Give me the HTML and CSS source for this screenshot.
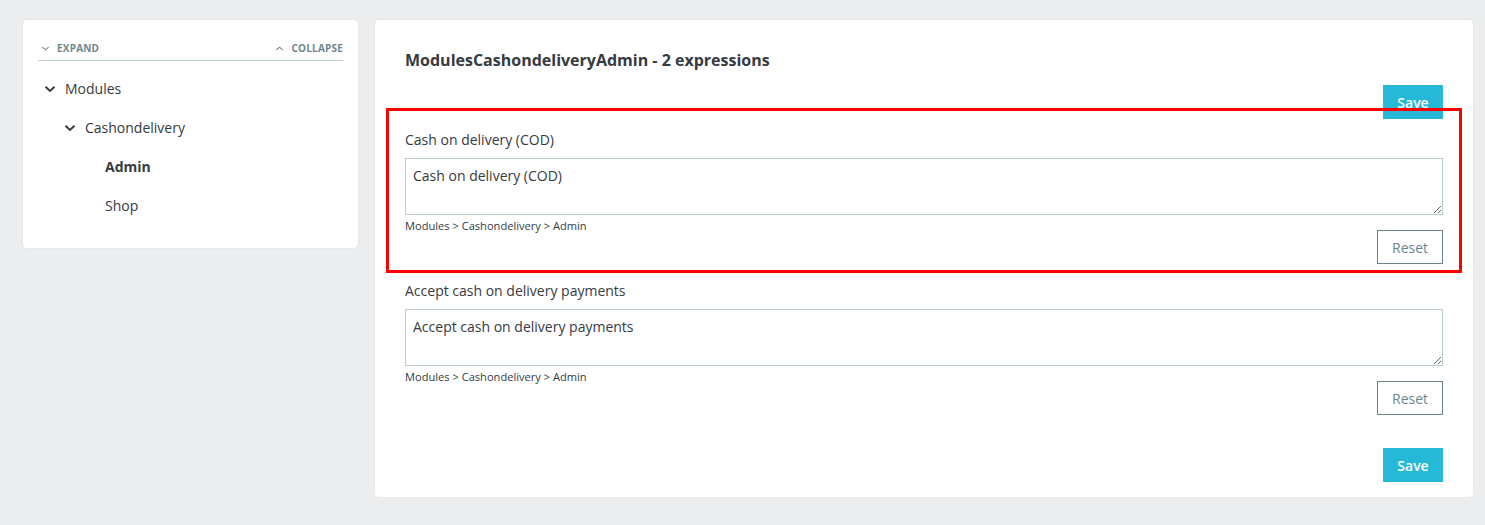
FILE: index.html
```html
<!DOCTYPE html>
<html lang="en">
<head>
<meta charset="utf-8">
<title>Translations</title>
<link rel="stylesheet" href="styles.css">
</head>
<body>
<div class="page">
  <aside class="card tree-card">
    <div class="tree-actions">
      <button class="tree-action" type="button">
        <svg class="tiny-chev" viewBox="0 0 10 10" width="9" height="9"><path d="M1.5 3.5 L5 6.5 L8.5 3.5" fill="none" stroke="currentColor" stroke-width="1.3"/></svg>
        EXPAND
      </button>
      <button class="tree-action" type="button">
        <svg class="tiny-chev" viewBox="0 0 10 10" width="9" height="9"><path d="M1.5 6.5 L5 3.5 L8.5 6.5" fill="none" stroke="currentColor" stroke-width="1.3"/></svg>
        COLLAPSE
      </button>
    </div>
    <ul class="tree">
      <li class="tree-item level-0">
        <svg class="chev" viewBox="0 0 12 12" width="12" height="12"><path d="M1.5 3.8 L6 8 L10.5 3.8" fill="none" stroke="currentColor" stroke-width="2"/></svg>
        <span>Modules</span>
      </li>
      <li class="tree-item level-1">
        <svg class="chev" viewBox="0 0 12 12" width="12" height="12"><path d="M1.5 3.8 L6 8 L10.5 3.8" fill="none" stroke="currentColor" stroke-width="2"/></svg>
        <span>Cashondelivery</span>
      </li>
      <li class="tree-item level-2 active"><span>Admin</span></li>
      <li class="tree-item level-2"><span>Shop</span></li>
    </ul>
  </aside>

  <main class="card form-card">
    <h2 class="form-title">ModulesCashondeliveryAdmin - 2 expressions</h2>
    <div class="save-row"><button class="btn-save" type="button">Save</button></div>

    <div class="group">
      <label class="group-label">Cash on delivery (COD)</label>
      <textarea class="group-input">Cash on delivery (COD)</textarea>
      <div class="crumb">Modules &gt; Cashondelivery &gt; Admin</div>
      <div class="reset-row"><button class="btn-reset" type="button">Reset</button></div>
    </div>

    <div class="group">
      <label class="group-label">Accept cash on delivery payments</label>
      <textarea class="group-input">Accept cash on delivery payments</textarea>
      <div class="crumb">Modules &gt; Cashondelivery &gt; Admin</div>
      <div class="reset-row"><button class="btn-reset" type="button">Reset</button></div>
    </div>

    <div class="save-row bottom"><button class="btn-save" type="button">Save</button></div>

    <div class="highlight"></div>
  </main>
</div>
</body>
</html>
```

FILE: styles.css
```css
* { box-sizing: border-box; }

html, body {
  margin: 0;
  padding: 0;
  background: #ebedef;
  font-family: "Open Sans", "Noto Sans", "Liberation Sans", sans-serif;
  color: #363a41;
}

.page {
  display: flex;
  align-items: flex-start;
  gap: 17px;
  padding: 20px 12px 0 23px;
}

.card {
  background: #fff;
  border-radius: 4px;
  box-shadow: 0 0 2px rgba(0, 0, 0, 0.08);
}

/* Left tree card */
.tree-card {
  width: 335px;
  height: 228px;
  padding: 19px 15px 0 15px;
}

.tree-actions {
  display: flex;
  justify-content: space-between;
  border-bottom: 1px solid #bbcdd2;
  height: 22px;
}

.tree-action {
  background: none;
  border: none;
  padding: 0;
  margin: 0;
  height: 18px;
  font-family: inherit;
  font-size: 10px;
  font-weight: 700;
  color: #6c868e;
  display: flex;
  align-items: center;
  gap: 8px;
  letter-spacing: 0.2px;
}

.tree-action:first-child { padding-left: 3px; gap: 7px; }
.tree-action:last-child { gap: 7px; }

.tiny-chev { color: #6c868e; }

.tree {
  list-style: none;
  margin: 0;
  padding: 8px 0 0 0;
}

.tree-item {
  display: flex;
  align-items: center;
  height: 39px;
  font-size: 14px;
  color: #363a41;
}

.tree-item .chev {
  color: #363a41;
  margin-right: 9px;
}

.level-0 { padding-left: 6px; }
.level-1 { padding-left: 26px; }
.level-2 { padding-left: 67px; }

.tree-item.active { font-weight: 700; }

/* Right form card */
.form-card {
  position: relative;
  flex: 1;
  height: 477px;
  padding: 29px 30px 0 30px;
}

.form-title {
  margin: 0;
  font-size: 16px;
  line-height: 22px;
  font-weight: 700;
  color: #363a41;
}

.save-row {
  display: flex;
  justify-content: flex-end;
  margin-top: 14px;
}

.save-row.bottom { margin-top: 33px; }

.btn-save {
  height: 34px;
  width: 60px;
  border: none;
  background: #25b9d7;
  color: #fff;
  font-family: inherit;
  font-size: 14px;
  font-weight: 600;
  padding: 0;
}

.group {
  display: flex;
  flex-direction: column;
  margin-top: 11px;
}

.group + .group { margin-top: 17px; }

.group-label {
  font-size: 14px;
  line-height: 20px;
  color: #363a41;
  margin-bottom: 8px;
}

.group-input {
  display: block;
  width: 100%;
  height: 57px;
  border: 1px solid #bbcdd2;
  border-radius: 0;
  padding: 7px 7px;
  font-family: inherit;
  font-size: 14px;
  line-height: 20px;
  color: #363a41;
  resize: vertical;
  outline: none;
}

.crumb {
  margin-top: 4px;
  font-size: 11.1px;
  line-height: 14px;
  color: #363a41;
}

.reset-row {
  display: flex;
  justify-content: flex-end;
  margin-top: -3px;
}

.btn-reset {
  height: 34px;
  width: 66px;
  background: #fff;
  border: 1px solid #6c868e;
  color: #6c868e;
  font-family: inherit;
  font-size: 14px;
  padding: 0;
}

/* Annotation overlay */
.highlight {
  position: absolute;
  left: 11px;
  top: 88px;
  width: 1076px;
  height: 165px;
  border: 3px solid #ff0000;
  pointer-events: none;
}
```
